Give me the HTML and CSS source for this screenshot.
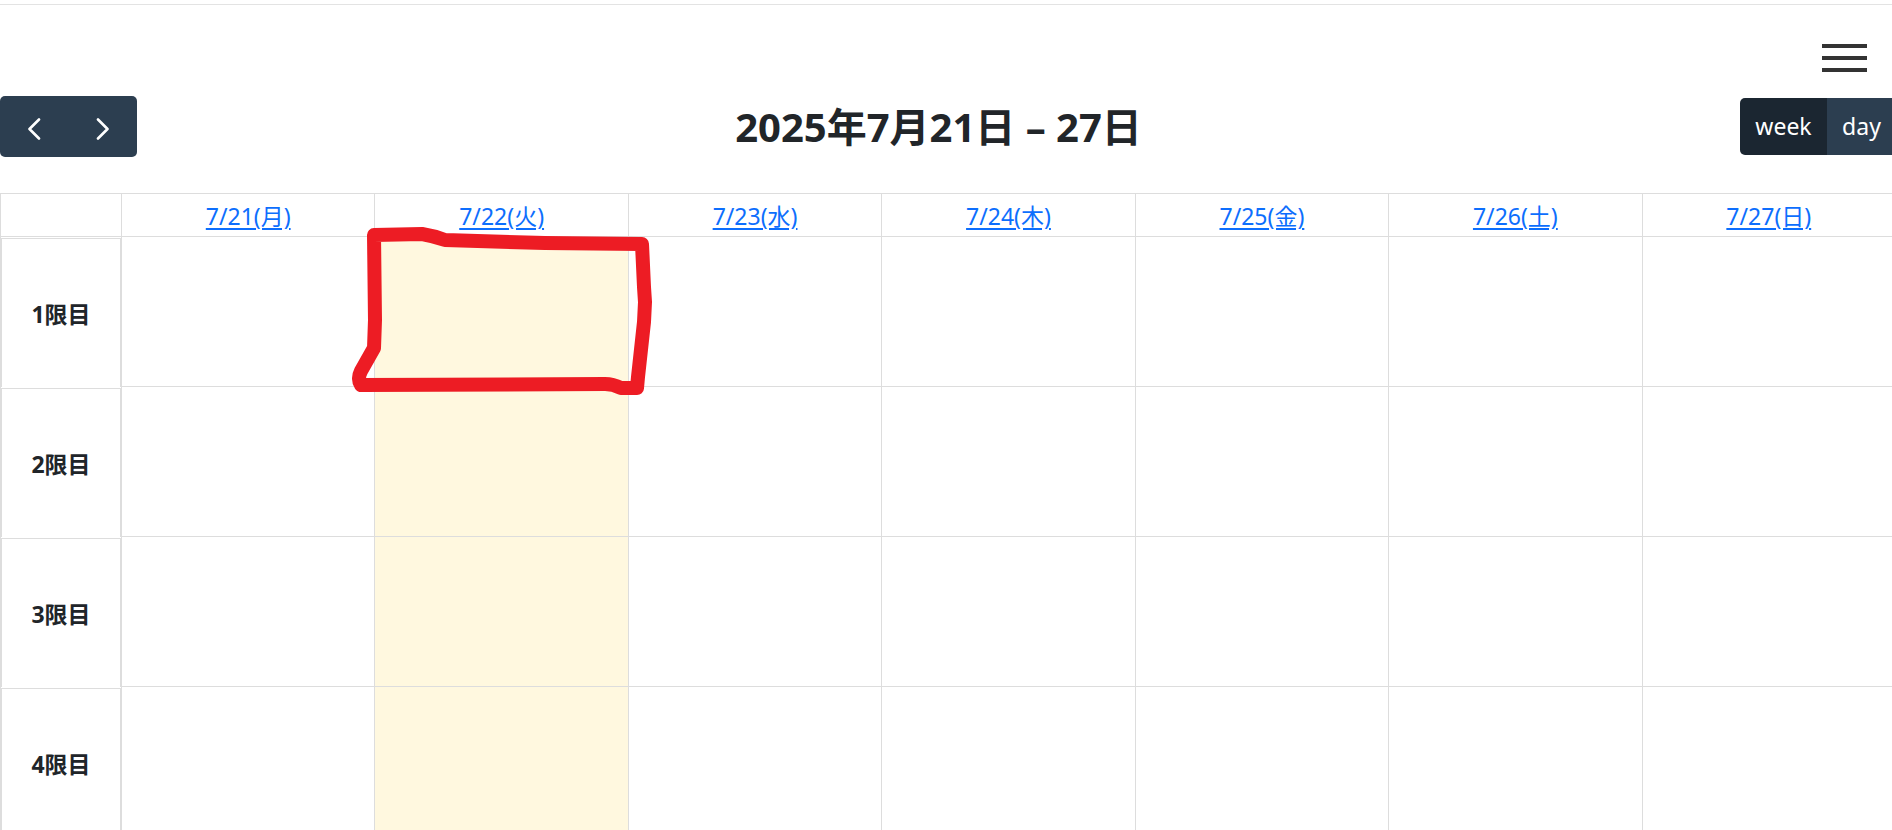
FILE: index.html
```html
<!DOCTYPE html>
<html lang="ja">
<head>
<meta charset="utf-8">
<title>時間割カレンダー</title>
<link rel="stylesheet" href="styles.css">
</head>
<body>
  <div class="topline"></div>
  <header class="navbar">
    <button class="hamburger" aria-label="メニュー">
      <span></span><span></span><span></span>
    </button>
  </header>

  <main class="calendar">
    <div class="toolbar">
      <div class="btn-group">
        <button class="btn btn-icon" aria-label="前へ">
          <svg width="14" height="22" viewBox="0 0 14 22"><polyline points="12,1.5 2.5,11 12,20.5" fill="none" stroke="#fff" stroke-width="2.6" stroke-linecap="round" stroke-linejoin="round"/></svg>
        </button>
        <button class="btn btn-icon" aria-label="次へ">
          <svg width="14" height="22" viewBox="0 0 14 22"><polyline points="2,1.5 11.5,11 2,20.5" fill="none" stroke="#fff" stroke-width="2.6" stroke-linecap="round" stroke-linejoin="round"/></svg>
        </button>
      </div>
      <h2 class="title">2025年7月21日 – 27日</h2>
      <div class="btn-group">
        <button class="btn btn-view active">week</button>
        <button class="btn btn-view btn-day">day</button>
      </div>
    </div>

    <div class="grid">
      <div class="cell head axis-head"></div>
      <div class="cell head"><a href="#">7/21(月)</a></div>
      <div class="cell head"><a href="#">7/22(火)</a></div>
      <div class="cell head"><a href="#">7/23(水)</a></div>
      <div class="cell head"><a href="#">7/24(木)</a></div>
      <div class="cell head"><a href="#">7/25(金)</a></div>
      <div class="cell head"><a href="#">7/26(土)</a></div>
      <div class="cell head"><a href="#">7/27(日)</a></div>

      <div class="cell axis"><div class="axis-inner">1限目</div></div>
      <div class="cell slot"></div><div class="cell slot today"></div><div class="cell slot"></div><div class="cell slot"></div><div class="cell slot"></div><div class="cell slot"></div><div class="cell slot"></div>

      <div class="cell axis"><div class="axis-inner">2限目</div></div>
      <div class="cell slot"></div><div class="cell slot today"></div><div class="cell slot"></div><div class="cell slot"></div><div class="cell slot"></div><div class="cell slot"></div><div class="cell slot"></div>

      <div class="cell axis"><div class="axis-inner">3限目</div></div>
      <div class="cell slot"></div><div class="cell slot today"></div><div class="cell slot"></div><div class="cell slot"></div><div class="cell slot"></div><div class="cell slot"></div><div class="cell slot"></div>

      <div class="cell axis"><div class="axis-inner">4限目</div></div>
      <div class="cell slot"></div><div class="cell slot today"></div><div class="cell slot"></div><div class="cell slot"></div><div class="cell slot"></div><div class="cell slot"></div><div class="cell slot"></div>
    </div>
  </main>

  <svg class="annotation" viewBox="0 0 1892 830" aria-hidden="true">
    <path d="M374,235 L422,234 Q434,236 445,240 L545,243 L642,244 L644,287 L645,302 L644,322 L638,377 L637,388 Q629,388 621,388 Q613,384 605,384 L361,385 Q357,379 361,371 L374,348 L375,320 Z" fill="none" stroke="#ed1c24" stroke-width="14" stroke-linecap="round" stroke-linejoin="round"/>
  </svg>
</body>
</html>
```

FILE: styles.css
```css
html, body {
  margin: 0;
  padding: 0;
  overflow: hidden;
  background: #fff;
}

body {
  position: relative;
  width: 1892px;
  height: 830px;
  font-family: "Noto Sans", "Noto Sans CJK JP", sans-serif;
  font-size: 23px;
  color: #212529;
}

.topline {
  height: 4px;
  border-bottom: 1px solid #e3e3e3;
}

.navbar {
  display: flex;
  justify-content: flex-end;
  padding: 39px 25px 0 0;
}

.hamburger {
  display: flex;
  flex-direction: column;
  justify-content: space-between;
  width: 45px;
  height: 28px;
  padding: 0;
  border: 0;
  background: transparent;
}

.hamburger span {
  display: block;
  height: 4px;
  background: #333;
}

.calendar {
  width: 1896px;
  margin-top: 24px;
}

.toolbar {
  display: flex;
  justify-content: space-between;
  align-items: center;
  height: 61px;
  margin-bottom: 36px;
}

.btn-group {
  display: flex;
}

.btn {
  display: flex;
  align-items: center;
  justify-content: center;
  border: 0;
  padding: 0;
  margin: 0;
  color: #fff;
  background: #2c3e50;
  font-family: "Noto Sans", "Noto Sans CJK JP", sans-serif;
  font-size: 23px;
}

.btn-icon {
  width: 68.5px;
  height: 61px;
}

.btn-icon svg {
  margin-top: 4px;
}

.btn-group .btn:first-child {
  border-radius: 5px 0 0 5px;
}

.btn-group .btn:last-child {
  border-radius: 0 5px 5px 0;
}

.btn-view {
  height: 57px;
  padding-bottom: 2px;
}

.btn-view.active {
  width: 87px;
  background: #1b2631;
}

.btn-day {
  width: 69px;
}

.title {
  margin: 0;
  font-size: 40px;
  font-weight: 700;
  color: #212529;
  line-height: 1.2;
}

.grid {
  display: grid;
  grid-template-columns: 121px repeat(7, 1fr);
  grid-template-rows: 43px repeat(4, 150px);
  border-top: 1px solid #ddd;
  border-left: 1px solid #ddd;
}

.cell {
  border-right: 1px solid #ddd;
  border-bottom: 1px solid #ddd;
}

.head {
  display: flex;
  align-items: center;
  justify-content: center;
}

.head a {
  color: #0d6efd;
  text-decoration: underline;
  text-underline-offset: 3px;
}

.axis {
  border-bottom: 0;
  padding-top: 1px;
}

.axis-inner {
  display: flex;
  align-items: center;
  justify-content: center;
  height: 100%;
  box-sizing: border-box;
  border-top: 1px solid #ddd;
  border-left: 1px solid #ddd;
  border-right: 1px solid #ddd;
  font-weight: 700;
}

.today {
  background: #fff8df;
}

.annotation {
  position: absolute;
  left: 0;
  top: 0;
  width: 1892px;
  height: 830px;
  pointer-events: none;
}
```
